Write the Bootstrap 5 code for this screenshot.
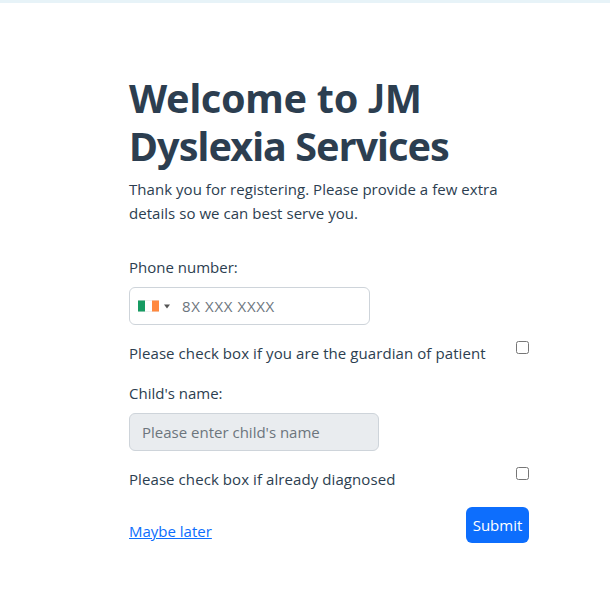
<!DOCTYPE html>
<html lang="en">
<head>
<meta charset="utf-8">
<meta name="viewport" content="width=device-width, initial-scale=1">
<title>JM Dyslexia Services</title>
<link href="https://cdn.jsdelivr.net/npm/bootstrap@5.3.0/dist/css/bootstrap.min.css" rel="stylesheet">
<style>
body { font-family: "Open Sans", "Noto Sans", sans-serif; color: #2c3e50; font-size: 15px; line-height: 24px; font-weight: 400; }
.top-strip { height: 3px; background: #e7f3f8; }
.welcome { width: 400px; margin: 71px 0 0 129px; }
.welcome h1 { font-family: "Noto Sans", sans-serif; font-size: 39.5px; line-height: 48px; font-weight: 700; margin-bottom: 7px; white-space: nowrap; }
.title-top { letter-spacing: -.3px; }
.title-bottom { letter-spacing: -.92px; }
.title-j { font-family: Lato, sans-serif; line-height: 1; }
.welcome span, .welcome label, .welcome a { white-space: nowrap; }
.intro { height: 48px; margin-bottom: 30px; letter-spacing: .04px; }
.form-control, .phone-box { height: 38px; font-size: 15px; }
.form-control, .phone-box.border { border-color: #ced4da !important; }
.phone-box { width: 241px; margin-top: 8px; }
.phone-box input { width: 180px; outline: 0; color: #2c3e50; margin-left: 9px; letter-spacing: .65px; }
.phone-box input::placeholder, .child-name::placeholder { color: #6c757d; opacity: 1; }
.child-name { width: 250px; margin-top: 8px; }
.child-name:disabled { background: #e9ecef; }
.check-line { height: 24px; margin-top: 16px; letter-spacing: .08px; }
.check-line input { width: 13px; height: 13px; margin: 0; }
.btn-send { width: 63px; height: 36px; font-size: 15px; line-height: 24px; }
</style>
</head>
<body>
<div class="top-strip"></div>
<main class="welcome">
  <h1><span class="title-top d-block">Welcome to <span class="title-j">J</span>M</span><span class="title-bottom d-block">Dyslexia Services</span></h1>
  <p class="intro"><span>Thank you for registering. Please provide a few extra</span><br><span>details so we can best serve you.</span></p>
  <form>
    <label class="d-block" for="phone">Phone number:</label>
    <div class="phone-box d-flex align-items-center border rounded-2 ps-2">
      <svg width="21" height="12" viewBox="0 0 21 12"><path fill="#f0f0f0" d="M0 0h21v12H0z"/><path fill="#fff" d="M7 1h7v10H7z"/><path fill="#169b62" d="M0 .5h7v11H0z"/><path fill="#ff883e" d="M14 .5h7v11h-7z"/></svg>
      <svg class="ms-1" width="10" height="5" viewBox="0 0 10 5"><path fill="#555" d="M1 .5h6L4 4.5z"/></svg>
      <input class="border-0 bg-transparent p-0" id="phone" type="tel" placeholder="8X XXX XXXX">
    </div>
    <div class="check-line d-flex justify-content-between align-items-start">
      <label for="guardian">Please check box if you are the guardian of patient</label>
      <input type="checkbox" id="guardian">
    </div>
    <label class="d-block mt-3" for="child">Child's name:</label>
    <input class="form-control child-name" id="child" type="text" placeholder="Please enter child's name" disabled>
    <div class="check-line d-flex justify-content-between align-items-start">
      <label for="diagnosed">Please check box if already diagnosed</label>
      <input type="checkbox" id="diagnosed">
    </div>
    <div class="d-flex justify-content-between align-items-end mt-3">
      <a class="text-decoration-underline" href="#">Maybe later</a>
      <button class="btn btn-primary btn-send p-0 border-0" type="button">Submit</button>
    </div>
  </form>
</main>
<script src="https://cdn.jsdelivr.net/npm/bootstrap@5.3.0/dist/js/bootstrap.bundle.min.js"></script>
</body>
</html>
